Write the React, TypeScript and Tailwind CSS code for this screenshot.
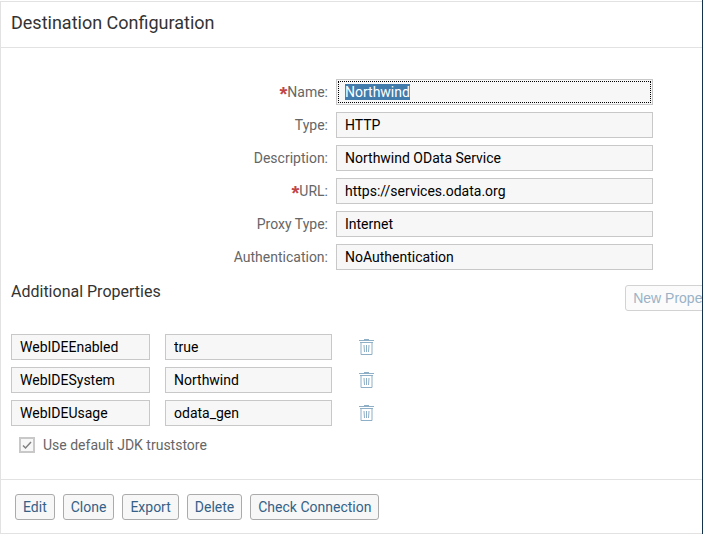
import { useEffect, useRef } from "react";

const fields = [
  { id: "name", label: "Name:", value: "Northwind", required: true },
  { id: "type", label: "Type:", value: "HTTP" },
  { id: "description", label: "Description:", value: "Northwind OData Service" },
  { id: "url", label: "URL:", value: "https://services.odata.org", required: true },
  { id: "proxy", label: "Proxy Type:", value: "Internet" },
  { id: "auth", label: "Authentication:", value: "NoAuthentication" },
];

const properties = [
  ["WebIDEEnabled", "true"],
  ["WebIDESystem", "Northwind"],
  ["WebIDEUsage", "odata_gen"],
];

const actions = ["Edit", "Clone", "Export", "Delete", "Check Connection"];

const inputClass =
  "block h-[26px] w-full min-w-0 rounded-none border border-[#c8c8c8] bg-[#f7f7f7] px-2 text-sm leading-4 text-black outline-none selection:bg-[#427cac] selection:text-white";

function TrashIcon() {
  return (
    <svg width="16" height="18" viewBox="0 0 16 18" fill="none" stroke="#8fafc6" aria-hidden="true">
      <path d="M6 1.5h5M1 2.5h15" />
      <path d="M2 4.5h13" />
      <path d="M3 5v11.5h11V5" />
      <path d="M6 7l.5 7M8.5 7v7M11 7l-.5 7" />
    </svg>
  );
}

export default function App() {
  const nameRef = useRef<HTMLInputElement>(null);

  useEffect(() => {
    nameRef.current?.focus();
    nameRef.current?.select();
  }, []);

  return (
    <main className="overflow-hidden border-r border-[#14324b] bg-white pt-px font-['Roboto','Liberation_Sans',sans-serif] text-sm text-[#666666]">
      <div className="border-y border-l border-[#e2e2e2]">
        <header className="flex h-[46px] items-center border-b border-[#e2e2e2] px-2.5 pb-1">
          <h1 className="text-lg text-[#333333]">Destination Configuration</h1>
        </header>

        <section className="grid grid-cols-[327fr_317fr_41fr] gap-x-2 gap-y-[7px] pt-[31px]">
          {fields.map((field) => (
            <div key={field.id} className="col-span-3 grid grid-cols-subgrid">
              <label htmlFor={field.id} className="flex items-center justify-end">
                {field.required && (
                  <span className="h-5 font-['Liberation_Sans',sans-serif] text-xl leading-6 font-bold text-[#c14646]">*</span>
                )}
                {field.label}
              </label>
              <input
                id={field.id}
                ref={field.id === "name" ? nameRef : undefined}
                readOnly
                defaultValue={field.value}
                className={`${inputClass} focus:outline focus:outline-1 focus:-outline-offset-3 focus:outline-dotted focus:outline-black`}
              />
            </div>
          ))}
        </section>

        <section className="pt-2.5 pl-2.5">
          <div className="flex h-[54px] items-start justify-between">
            <h2 className="text-base text-[#333333]">Additional Properties</h2>
            <button
              disabled
              className="-mr-6 mt-[5px] h-[26px] shrink-0 rounded-[3px] border border-[#d2d2d2] bg-[#fbfbfb] px-[7px] font-['Liberation_Sans',sans-serif] whitespace-nowrap text-[#99b2c6]"
            >
              New Property
            </button>
          </div>
          <div className="flex flex-col gap-[7px]">
            {properties.map(([key, value]) => (
              <div key={key} className="flex items-center">
                <div className="w-[139px]">
                  <input aria-label="Property name" readOnly defaultValue={key} className={inputClass} />
                </div>
                <div className="ml-[15px] w-[167px]">
                  <input aria-label={key} readOnly defaultValue={value} className={inputClass} />
                </div>
                <button aria-label={`Delete ${key}`} className="ml-[26px]">
                  <TrashIcon />
                </button>
              </div>
            ))}
          </div>
          <label className="flex h-[53px] items-start gap-2 pt-[9px] pl-2">
            <span className="mt-0.5 grid size-4">
              <input
                type="checkbox"
                defaultChecked
                className="col-start-1 row-start-1 size-4 appearance-none border-2 border-[#c8c8c8] bg-[#f7f7f7]"
              />
              <svg
                viewBox="0 0 16 16"
                fill="none"
                stroke="#808080"
                strokeWidth="1.5"
                className="pointer-events-none col-start-1 row-start-1 size-4"
                aria-hidden="true"
              >
                <path d="M4 8.5l2.5 2.5L12 5" />
              </svg>
            </span>
            Use default JDK truststore
          </label>
        </section>

        <footer className="flex gap-2 border-t border-[#e2e2e2] px-3.5 pt-3.5 pb-[13px]">
          {actions.map((action) => (
            <button
              key={action}
              className="h-[26px] rounded-[3px] border border-[#ababab] bg-[#f7f7f7] px-[7px] whitespace-nowrap text-[#346187]"
            >
              {action}
            </button>
          ))}
        </footer>
      </div>
    </main>
  );
}
